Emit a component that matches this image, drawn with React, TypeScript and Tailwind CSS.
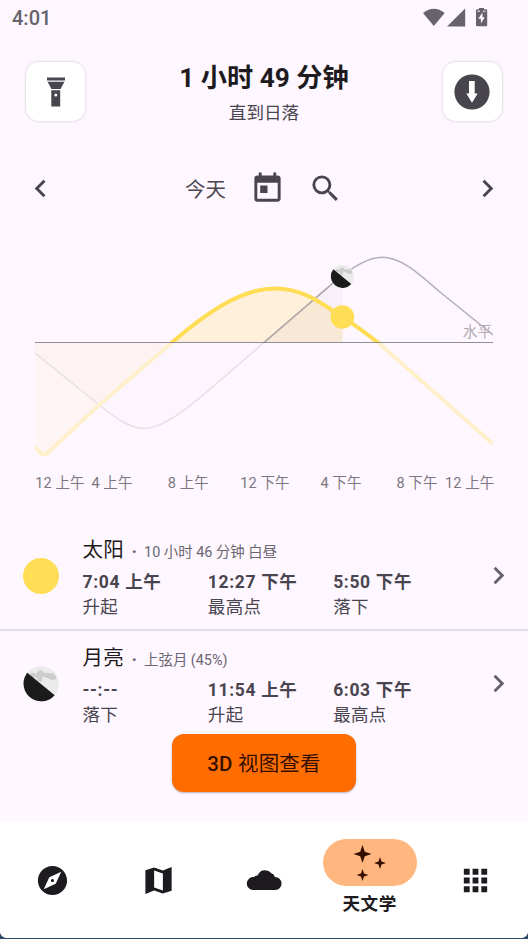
import { MdChevronLeft, MdChevronRight, MdSearch, MdToday, MdExplore, MdApps } from "react-icons/md";

const SUN_PATH =
  "M35 447 L40.5 453 Q44.5 456.5 48 452.5 L98 406 L172 342.5 C205 314 241 288.5 274.5 288.5 C301 288.5 318 300.5 342.5 317 Q356 325.5 378 342.5 L493 444";
const SUN_AREA =
  "M35 447 L40.5 453 Q44.5 456.5 48 452.5 L98 406 L172 342.5 C205 314 241 288.5 274.5 288.5 C301 288.5 318 300.5 342.5 317 V342.5 H35 Z";
const MOON_PATH =
  "M35 353 L98 404 C115 418 130 428.5 144 428.5 C170 428.5 205 393 264 342.5 L333 283 C352 267 368 257.3 382 257.3 C402 257.3 420 275 440 292 L493 335";
const MOON_AREA =
  "M35 353 L98 404 C115 418 130 428.5 144 428.5 C170 428.5 205 393 264 342.5 L333 283 L342.5 275 V342.5 H35 Z";

const hours = [
  { x: 60, label: "12 上午" },
  { x: 112, label: "4 上午" },
  { x: 188.3, label: "8 上午" },
  { x: 265, label: "12 下午" },
  { x: 341, label: "4 下午" },
  { x: 417, label: "8 下午" },
  { x: 469.7, label: "12 上午" },
];

const sunTimes = [
  { time: "7:04 上午", label: "升起" },
  { time: "12:27 下午", label: "最高点" },
  { time: "5:50 下午", label: "落下" },
];

const moonTimes = [
  { time: "--:--", label: "落下" },
  { time: "11:54 上午", label: "升起" },
  { time: "6:03 下午", label: "最高点" },
];

const MoonShape = () => (
  <>
    <circle cx="18" cy="18" r="17.8" fill="#ebebeb" />
    <path
      d="M7 8 Q9.5 5.5 13 8.5 Q14.5 4 18 4.3 Q21.5 5 21 7.5 Q24 6 26.5 7.5 Q30 5.5 33 10.5 Q34 14 30.5 13.8 Q27 14.2 25 12 Q22 12.5 20 10 L18.5 15.5 L14.5 15 Q15 11 12 11.5 Q9 12 7 8Z"
      fill="#cccccc"
    />
    <path d="M4.3 6.65 A17.8 17.8 0 0 0 31.7 29.35 Z" fill="#1b1b1b" />
  </>
);

const SkyChart = () => (
  <svg className="block w-full h-[270px]" viewBox="0 235 528 270">
    <defs>
      <clipPath id="day">
        <rect x="35" y="235" width="458" height="107.5" />
      </clipPath>
      <clipPath id="night">
        <rect x="35" y="342.5" width="458" height="130" />
      </clipPath>
    </defs>
    <text x="492" y="336.5" textAnchor="end" fontSize="14.6" fill="#b2adb5">水平</text>
    <g clipPath="url(#day)">
      <path d={MOON_PATH} fill="none" stroke="#b4afb7" strokeWidth="1.5" />
      <path d={SUN_AREA} fill="#ffd84a" fillOpacity="0.2" />
      <path d={MOON_AREA} fill="#49454f" fillOpacity="0.04" />
      <path d="M264 342.5 L333 283" stroke="#b1a8aa" strokeWidth="1.5" />
      <path d={SUN_PATH} fill="none" stroke="#ffdd55" strokeWidth="4" />
    </g>
    <g clipPath="url(#night)">
      <path d={SUN_AREA} fill="#ffee90" fillOpacity="0.1" />
      <path d={MOON_AREA} fill="#49454f" fillOpacity="0.012" />
      <path d={MOON_PATH} fill="none" stroke="#e7e0e7" strokeWidth="1.5" />
      <path d={SUN_PATH} fill="none" stroke="#fff0cb" strokeWidth="4" />
    </g>
    <path d="M35 342.5 H493" stroke="#928e96" strokeWidth="1" />
    <svg x="330.5" y="264.8" width="23.6" height="23.6" viewBox="0 0 36 36">
      <MoonShape />
    </svg>
    <circle cx="342.4" cy="317" r="11.8" fill="#ffdd55" />
    {hours.map((h, i) => (
      <text key={i} x={h.x} y="488" textAnchor="middle" fontSize="14.5" letterSpacing="0.1" fill="#7b7680">
        {h.label}
      </text>
    ))}
  </svg>
);

const BodyRow = ({ icon, name, detail, times }: any) => (
  <div className="flex items-start pl-[23px] pr-3 h-full">
    <div className="w-9 h-9 mt-[23px] shrink-0">{icon}</div>
    <div className="ml-[23.5px] flex-1">
      <div className="flex items-baseline h-[34px] whitespace-nowrap">
        <span className="text-[20.5px] leading-[31px] tracking-[0.3px] text-[#1d1b20]">{name}</span>
        <span className="w-5 text-center text-[17px] leading-6 font-black text-[#6b6670]">·</span>
        <span className="text-[14.4px] leading-6 text-[#6b6670]">{detail}</span>
      </div>
      <div className="grid grid-cols-3 w-[376px] pt-px text-[17.5px] text-[#49454f] leading-[25px]">
        {times.map((t: any) => (
          <div key={t.label} className="whitespace-nowrap">
            <p className="font-bold tracking-[0.65px]">{t.time}</p>
            <p className="leading-6 tracking-[0.3px]">{t.label}</p>
          </div>
        ))}
      </div>
    </div>
    <MdChevronRight className="w-[35px] h-[35px] mt-[23px] text-[#67636c]" />
  </div>
);

export default function App() {
  return (
    <div className="w-[528px] h-[939px] bg-[#2c4964] overflow-hidden font-['Roboto','Noto_Sans_CJK_SC',sans-serif]">
      <div className="flex flex-col h-[938px] bg-[#fef7ff] rounded-b-[7px] overflow-hidden">
        {/* status bar */}
        <div className="flex items-center justify-between h-[36px] pl-3 pr-[38px] text-[#67636a]">
          <span className="text-[20px] font-medium">4:01</span>
          <svg width="68" height="20" viewBox="0 0 68 20" fill="#67636a">
            <path d="M1 5 Q12 -3.5 22.7 5 L11.8 18 Z" />
            <path d="M43.2 0.5 V18.5 H25 Z" />
            <path d="M57 0 H62 V1.3 H64 Q65.2 1.3 65.2 2.5 V17 Q65.2 18.2 64 18.2 H55.2 Q54 18.2 54 17 V2.5 Q54 1.3 55.2 1.3 H57 Z" />
            <path d="M60.5 4.5 L56.2 10.7 H58.9 V15.5 L62.8 9.3 H60.5 Z" fill="#fef7ff" />
            <path d="M55.5 3.2 H58 M61 3.2 H63.5" stroke="#fef7ff" />
          </svg>
        </div>

        <header className="flex items-start justify-between pt-[26px] px-[26px] h-[112px]">
          <button className="flex items-center justify-center w-[59px] h-[59px] rounded-[13px] bg-white shadow-[0_0_3px_rgba(0,0,0,0.2)]">
            <svg width="18" height="30" viewBox="0 0 18 30" fill="#49454f">
              <path d="M0 0.5 H18 V3.5 H0Z M0.5 4.8 H17.5 L13.5 12 H4.5Z M4.3 13.3 H13.2 V29.5 H4.3Z" />
              <circle cx="8.8" cy="18" r="1.5" fill="#fff" />
            </svg>
          </button>
          <div className="text-center whitespace-nowrap">
            <h1 className="text-[26.2px] leading-8 font-bold text-[#1d1b20]">1 小时 49 分钟</h1>
            <p className="mt-[7px] text-[17.6px] leading-6 text-[#49454f]">直到日落</p>
          </div>
          <button className="flex items-center justify-center w-[59px] h-[59px] rounded-[13px] bg-white shadow-[0_0_3px_rgba(0,0,0,0.2)]">
            <svg width="36" height="36" viewBox="0 0 36 36">
              <circle cx="18" cy="18" r="17.6" fill="#49454f" />
              <path d="M15 7 H20.7 V19.5 H23.7 L18 28.7 L12.3 19.5 H15Z" fill="#fff" />
            </svg>
          </button>
        </header>

        <div className="flex items-center justify-between h-[81px] px-[23px] text-[#49454f]">
          <MdChevronLeft className="w-[35px] h-[35px]" />
          <div className="flex items-center">
            <span className="pt-[3px] text-[20.5px]">今天</span>
            <MdToday className="w-[35px] h-[35px] ml-6" />
            <MdSearch className="w-[35px] h-[35px] ml-[23px]" />
          </div>
          <MdChevronRight className="w-[35px] h-[35px]" />
        </div>

        <div className="h-[286px] pt-[6px]">
          <SkyChart />
        </div>

        <section className="flex flex-col h-[307px]">
          <div className="h-[116px] pt-5 border-b-2 border-[#e2dce4]">
            <BodyRow
              icon={<div className="w-9 h-9 rounded-full bg-[#ffdd55]" />}
              name="太阳"
              detail="10 小时 46 分钟 白昼"
              times={sunTimes}
            />
          </div>
          <div className="h-[103px] pt-3">
            <BodyRow
              icon={
                <svg width="36" height="36" viewBox="0 0 36 36">
                  <MoonShape />
                </svg>
              }
              name="月亮"
              detail="上弦月 (45%)"
              times={moonTimes}
            />
          </div>
          <button className="self-center w-[184px] h-[58px] pt-0.5 rounded-[12px] bg-[#ff6d00] text-[20.5px] text-[#351000] tracking-[0.2px] shadow-[0_1px_2px_rgba(0,0,0,0.3)]">
            <span className="font-medium">3D</span> 视图查看
          </button>
        </section>

        <nav className="grid grid-cols-5 h-[116px] bg-white text-[#1d1b20]">
          <div className="flex items-center justify-center">
            <MdExplore className="w-[35px] h-[35px]" />
          </div>
          <div className="flex items-center justify-center">
            <svg width="35" height="35" viewBox="0 0 24 24" fill="currentColor">
              <path d="M15 5.1 9 3 3 5.02v16.2l6-2.33 6 2.1 6-2.02V2.77L15 5.1zm0 13.79-6-2.11V5.11l6 2.11v11.67z" />
            </svg>
          </div>
          <div className="flex items-center justify-center">
            <svg width="36" height="20" viewBox="0 0 36 20" fill="currentColor">
              <path d="M6.6 20 A6.5 6.5 0 0 1 8 7 Q9.5 5.6 11.5 5.6 Q14 0.3 18.5 0.3 Q23 0.3 25.3 3.3 Q28.3 4 28.8 7 A6.5 6.5 0 0 1 29.3 20 Z" />
            </svg>
          </div>
          <div className="flex flex-col items-center pt-[17px]">
            <div className="flex items-center justify-center w-[94px] h-[47px] rounded-full bg-[#ffb77f]">
              <svg width="34" height="36" viewBox="0 0 34 36" fill="#351000">
                <path d="M9.5 0 L11.8 6.7 L18.5 9 L11.8 11.3 L9.5 18 L7.2 11.3 L0.5 9 L7.2 6.7Z" />
                <path d="M27 12 L28.5 16.5 L33 18 L28.5 19.5 L27 24 L25.5 19.5 L21 18 L25.5 16.5Z" />
                <path d="M9.5 24 L11 28.5 L15.5 30 L11 31.5 L9.5 36 L8 31.5 L3.5 30 L8 28.5Z" />
              </svg>
            </div>
            <span className="mt-[6px] text-[17.6px] leading-6 font-bold tracking-[0.5px]">天文学</span>
          </div>
          <div className="flex items-center justify-center">
            <MdApps className="w-[35px] h-[35px]" />
          </div>
        </nav>
      </div>
    </div>
  );
}
